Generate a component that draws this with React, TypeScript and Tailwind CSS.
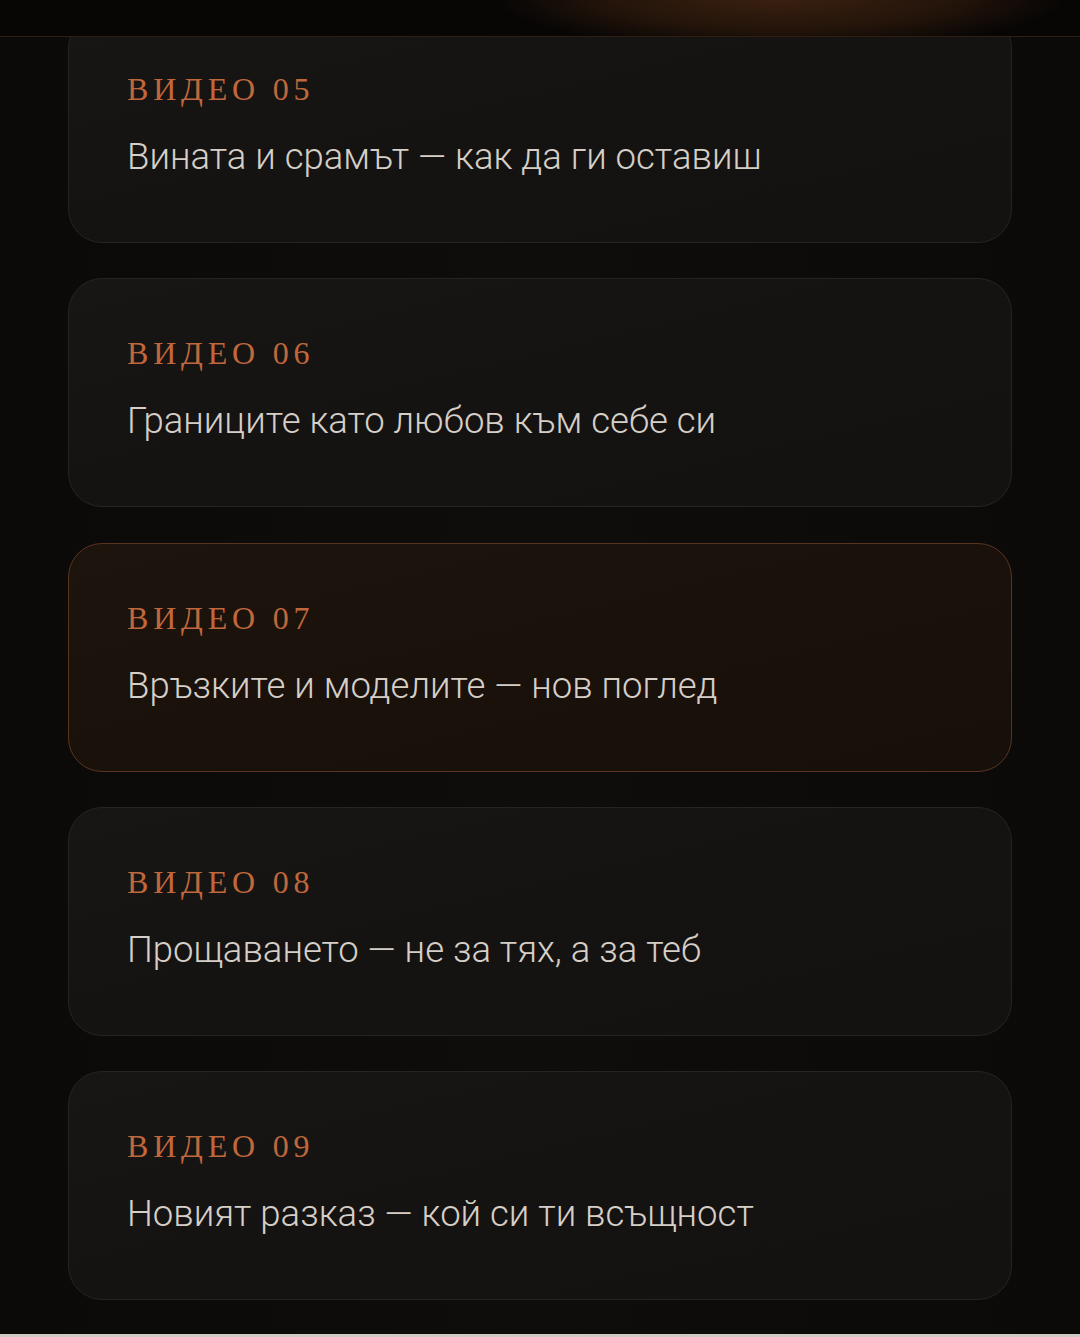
import React from "react";

type Video = {
  num: string;
  title: string;
  active?: boolean;
};

const videos: Video[] = [
  { num: "05", title: "Вината и срамът — как да ги оставиш" },
  { num: "06", title: "Границите като любов към себе си" },
  { num: "07", title: "Връзките и моделите — нов поглед", active: true },
  { num: "08", title: "Прощаването — не за тях, а за теб" },
  { num: "09", title: "Новият разказ — кой си ти всъщност" },
];

const VideoCard = ({ num, title, active }: Video) => {
  return (
    <div
      className={
        active
          ? "h-[229px] rounded-[34px] border border-[#5a341f] bg-gradient-to-br from-[#1d140e] via-[#1a110b] to-[#170f0a] pl-[58px] pt-[54px]"
          : "h-[229px] rounded-[34px] border border-[#29221d] bg-gradient-to-br from-[#181614] via-[#151311] to-[#141210] pl-[58px] pt-[54px]"
      }
    >
      <div className="font-['Liberation_Serif',serif] text-[32px] leading-[40px] tracking-[0.15em] text-[#c0683b]">
        ВИДЕО {num}
      </div>
      <div className="mt-[25px] font-['Roboto',sans-serif] text-[36.5px] font-light leading-[46px] text-[#d5cfc7]">
        {title}
      </div>
    </div>
  );
};

const App = () => {
  return (
    <div className="relative h-[1337px] w-[1080px] overflow-hidden bg-gradient-to-r from-[#0c0a09] via-[#0f0d0c] to-[#0c0a09]">
      <div className="flex flex-col gap-[35.3px] px-[68px] pt-[14px]">
        {videos.map((v) => (
          <VideoCard key={v.num} {...v} />
        ))}
      </div>

      {/* fixed top bar */}
      <div className="absolute left-0 right-0 top-0 h-[37px] overflow-hidden border-b border-[#301e13] bg-[#080605]">
        <div className="absolute left-[500px] top-[-60px] h-[110px] w-[560px] rounded-full bg-[radial-gradient(ellipse_at_center,#3c2110_0%,#23140a_45%,transparent_72%)]" />
      </div>

      <div className="absolute bottom-0 left-0 right-0 h-[3px] bg-[#cfcac4]" />
    </div>
  );
};

export default App;
